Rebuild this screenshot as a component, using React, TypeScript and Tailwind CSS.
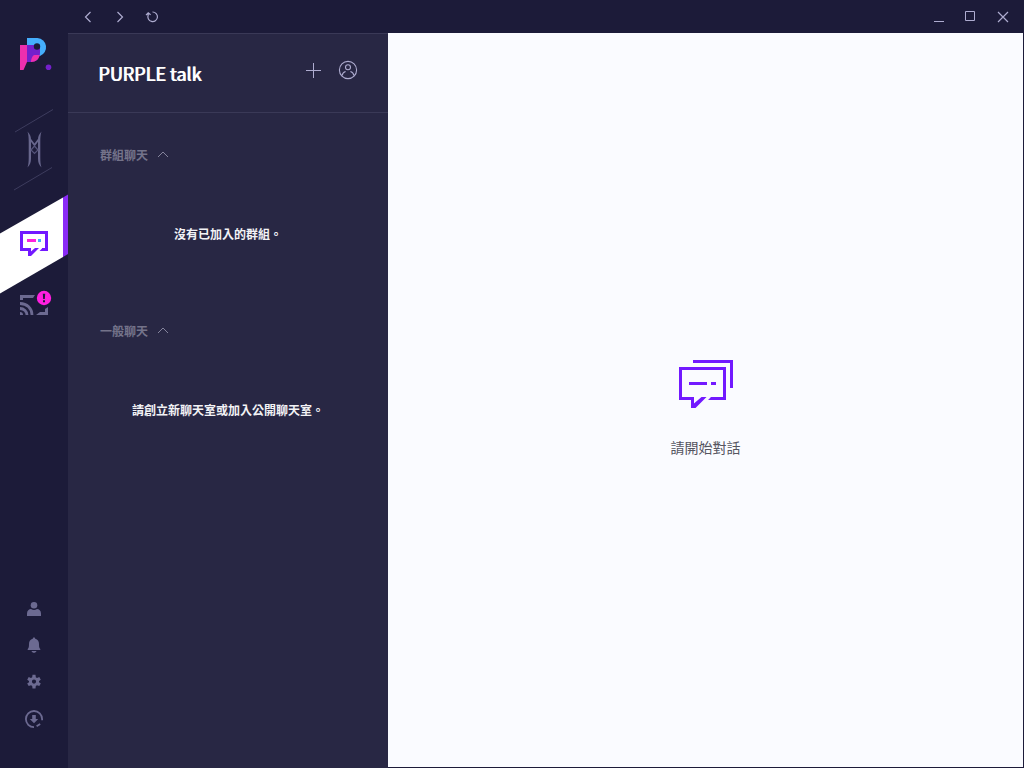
import type { ReactNode } from 'react';

function Logo() {
  return (
    <a href="#home" aria-label="PURPLE" className="block h-[108px] w-full">
      <svg viewBox="0 0 68 108" className="block w-full">
        <path d="M27 38h10.500a9.300 9.300 0 0 1 2.500 18H27z" fill="#45aefc" />
        <path d="M20 45h7v17l-3.500 8H20z" fill="#ee2fae" />
        <path d="M27 45h13v8c0 5-3.500 9-9 9h-4z" fill="#7420cc" />
        <path d="M39.500 55H34.500c-2 0-3.500 4-3.500 7 5 0 8-3 8.500-7z" fill="#ee2fae" />
        <circle cx="37" cy="46.500" r="3.200" fill="#1c1b39" />
        <circle cx="48.500" cy="67.300" r="2.800" fill="#7420cc" />
      </svg>
    </a>
  );
}

function GameButton() {
  return (
    <button type="button" aria-label="Game" className="block h-[86px] w-full">
      <svg viewBox="0 108 68 86" className="block w-full" fill="none">
        <path d="M15 132 53 109.500M14 190 52 167.500" stroke="#3d3c5e" />
        <path d="M27.500 131.500c2.300 2.500 3.500 5 3.500 8v19c0 4-1 6.500-3.500 9 1-3 1.200-6 1.200-10v-16c0-4-.2-7-1.200-10zM41.500 131.500c-2.300 2.500-3.500 5-3.500 8v19c0 4 1 6.500 3.500 9-1-3-1.200-6-1.200-10v-16c0-4 .2-7 1.200-10z" fill="#68678d" />
        <path d="m30 139 4.500 6 4.500-6" stroke="#68678d" strokeWidth="1.800" />
        <path d="m31 150 3.500-4 3.500 4-3.500 3.500z" stroke="#55547a" strokeWidth="1.200" />
      </svg>
    </button>
  );
}

function TalkButton() {
  return (
    <button type="button" aria-label="Talk" aria-current="page" className="block h-[100px] w-full">
      <svg viewBox="0 194 68 100" className="block w-full">
        <path d="M0 233.500 63 197.500v59.500L0 293.500z" fill="#fff" />
        <path d="M63 197.500 68 194.500v59.500l-5 3z" fill="#8a2bf5" />
        <path d="M42 249.500H46.500V232.500H21.500v17H29.500V255" fill="none" stroke="#7219ff" strokeWidth="3" />
        <path d="M28 256v-2l7-6h4l-8 8zM39.500 251l3-3v3z" fill="#7219ff" />
        <path d="M27 239h9v3h-9z" fill="#ff22dc" />
        <path d="M38 239h3v3h-3z" fill="#45aeff" />
      </svg>
    </button>
  );
}

function StreamButton() {
  return (
    <button type="button" aria-label="Streaming" className="block h-[26px] w-full">
      <svg viewBox="0 294 68 26" className="block w-full overflow-visible">
        <path d="M20 295h15l-2 3H23v2h-3zM48 307v8H36l4-3h5v-3z" fill="#6c6a91" />
        <path d="M20 303.500c7 0 12 5 12 11.500M20 308.500c4 0 7 3 7 6.500" fill="none" stroke="#6c6a91" strokeWidth="2.800" />
        <path d="M20 312a3 3 0 0 1 3 3h-3z" fill="#6c6a91" />
        <circle cx="44" cy="298" r="7.200" fill="#ff1fe0" />
        <path d="M42.800 293.700h2.400l-.4 5.300h-1.600zM43 300.200h2v2h-2z" fill="#1c1b39" />
      </svg>
    </button>
  );
}

function ToolButton({ label, children }: { label: string; children: ReactNode }) {
  return (
    <button type="button" aria-label={label} className="flex size-5 items-center justify-center">
      <svg viewBox="0 0 20 20" className="size-5" fill="#6c6a91">
        {children}
      </svg>
    </button>
  );
}

function Sidebar() {
  return (
    <nav className="flex w-[68px] shrink-0 flex-col items-center">
      <Logo />
      <GameButton />
      <TalkButton />
      <StreamButton />
      <div className="mt-auto flex flex-col gap-[18px] pb-[39px]">
        <div className="flex flex-col gap-4">
          <ToolButton label="Profile">
            <circle cx="10" cy="6.300" r="3.300" />
            <path d="M3 17v-2.500C3 11.500 5 10 7 10c2 1.400 4 1.400 6 0 2 0 4 1.500 4 4.500V17z" />
          </ToolButton>
          <ToolButton label="Notifications">
            <path d="M10 2.500c.8 0 1.200.5 1.200 1.200C14 4.300 15 6.500 15 9c0 3 .3 4 1.300 5v1H3.700v-1C4.700 13 5 12 5 9c0-2.500 1-4.700 3.800-5.300 0-.7.400-1.200 1.200-1.200zM7.500 16h5c-.4 1.200-1.300 1.800-2.500 1.800S7.900 17.200 7.500 16z" />
          </ToolButton>
          <ToolButton label="Settings">
            <path fillRule="evenodd" d="M8.500 3.800h3l.3 2.400 1.200.7 2.300-.8 1.500 2.600-1.800 1.300v1.200l1.800 1.300-1.500 2.600-2.300-.8-1.200.7-.3 2.400h-3l-.3-2.400-1.200-.7-2.300.8-1.500-2.600L5 11.200V10L3.200 8.700l1.500-2.600 2.300.8 1.200-.7zM10 8.500a2.100 2.100 0 1 0 0 4.200 2.100 2.100 0 0 0 0-4.200z" />
          </ToolButton>
        </div>
        <ToolButton label="Downloads">
          <path d="M10 18.200a8.100 8.100 0 1 1 8.100-8.100v1.200M12.600 17.200l3.600-2.200" fill="none" stroke="#6c6a91" strokeWidth="1.800" />
          <path d="M8.200 6h3.600v4h2.400L10 14.200 5.800 10h2.400z" />
        </ToolButton>
      </div>
    </nav>
  );
}

function TitleBar() {
  return (
    <header className="flex h-[33px] shrink-0 items-center justify-between pr-[13px] pb-px pl-3 text-[#aeacd0]">
      <div className="flex gap-4">
        <button type="button" aria-label="Back">
          <svg viewBox="0 0 16 16" className="size-4" fill="none" stroke="currentColor" strokeWidth="1.200"><path d="m10.500 4-5 5 5 5" /></svg>
        </button>
        <button type="button" aria-label="Forward">
          <svg viewBox="0 0 16 16" className="size-4" fill="none" stroke="currentColor" strokeWidth="1.200"><path d="m5.500 4 5 5-5 5" /></svg>
        </button>
        <button type="button" aria-label="Reload">
          <svg viewBox="0 0 16 16" className="size-4" fill="none" stroke="currentColor" strokeWidth="1.200"><path d="M8.500 4a4.800 4.800 0 1 1-4.300 3V5M2 7.200l2.200-2.400 2.400 2" /></svg>
        </button>
      </div>
      <div className="flex gap-4">
        <button type="button" aria-label="Minimize">
          <svg viewBox="0 0 16 16" className="size-4" fill="none" stroke="currentColor"><path d="M3 13.500h10" /></svg>
        </button>
        <button type="button" aria-label="Maximize">
          <svg viewBox="0 0 16 16" className="size-4" fill="none" stroke="currentColor"><path d="M2.500 3.500h9v9h-9z" /></svg>
        </button>
        <button type="button" aria-label="Close">
          <svg viewBox="0 0 16 16" className="size-4" fill="none" stroke="currentColor" strokeWidth="1.200"><path d="m3 4 10 10M13 4 3 14" /></svg>
        </button>
      </div>
    </header>
  );
}

function ChatSection({ title, message }: { title: string; message: string }) {
  return (
    <section className="h-44">
      <h2>
        <button type="button" aria-expanded="true" className="flex items-center gap-2 px-8 text-xs leading-5 font-bold text-[#74738a]">
          {title}
          <svg viewBox="0 0 14 14" className="size-[14px]" fill="none" stroke="#85849c"><path d="m2 9 5-5 5 5" /></svg>
        </button>
      </h2>
      <p className="mt-[59px] text-center text-xs leading-5 font-bold text-[#f2f2f5]">{message}</p>
    </section>
  );
}

function ChatPanel() {
  return (
    <aside className="w-80 shrink-0 border-t border-[#3a3957] bg-[#282744]">
      <div className="flex h-[79px] items-center justify-between border-b border-[#3a3957] px-[30px] pb-0.5">
        <h1 className="pt-0.5 text-lg font-normal text-white [text-shadow:1px_0_0_currentColor]">PURPLE talk</h1>
        <div className="flex gap-[15px] pb-1 text-[#aeacd0]">
          <button type="button" aria-label="New chat">
            <svg viewBox="0 0 20 20" className="size-5" fill="none" stroke="currentColor"><path d="M3 10.500h15M10.500 3v15" /></svg>
          </button>
          <button type="button" aria-label="Friends">
            <svg viewBox="0 0 20 20" className="size-5" fill="none" stroke="currentColor" strokeWidth="1.100">
              <circle cx="10" cy="10" r="8.600" />
              <circle cx="10" cy="7.300" r="2.500" />
              <path d="M4 15.500c.5-2 1.800-3.500 3.600-4M16 15.500c-.5-2-1.800-3.500-3.600-4" />
            </svg>
          </button>
        </div>
      </div>
      <div className="pt-8">
        <ChatSection title="群組聊天" message="沒有已加入的群組。" />
        <ChatSection title="一般聊天" message="請創立新聊天室或加入公開聊天室。" />
      </div>
    </aside>
  );
}

function EmptyConversation() {
  return (
    <main className="flex flex-1 flex-col items-center justify-center gap-[29px] bg-[#fafbff] pt-4">
      <svg viewBox="679 360 54 48" className="h-12 w-[54px]">
        <path d="M693 361.500h38.500V388" fill="none" stroke="#7219ff" strokeWidth="3" />
        <path d="M711 398.500H724.500V368.500H680.500v30H692.500v9" fill="none" stroke="#7219ff" strokeWidth="3" />
        <path d="M708 400l3-3v3zM691 408v-2l10.500-9h5L695.500 408z" fill="#7219ff" />
        <path d="M689 382h18v3h-18zM711 382h5v3h-5z" fill="#7219ff" />
      </svg>
      <p className="text-sm leading-5 text-[#55555f]">請開始對話</p>
    </main>
  );
}

export default function App() {
  return (
    <div className="flex min-h-screen bg-[#1c1b39] font-['Noto_Sans_CJK_TC','Noto_Sans',sans-serif]">
      <Sidebar />
      <div className="flex min-w-0 flex-1 flex-col">
        <TitleBar />
        <div className="flex flex-1 pr-px">
          <ChatPanel />
          <div className="flex flex-1 pb-px">
            <EmptyConversation />
          </div>
        </div>
      </div>
    </div>
  );
}
